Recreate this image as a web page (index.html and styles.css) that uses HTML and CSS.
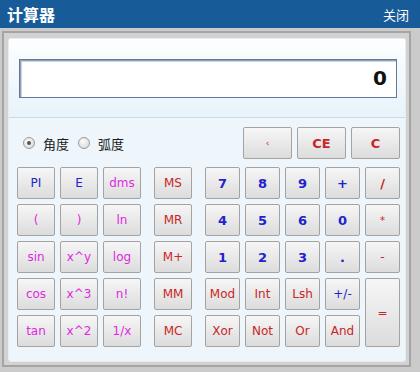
FILE: index.html
```html
<!DOCTYPE html>
<html lang="zh">

<head>
    <title>计算器</title>
    <meta charset="UTF-8">
    <meta name="viewport" content="width=device-width, initial-scale=1.0">
    <link rel="stylesheet" href="styles.css">
</head>

<body>
    <div class="calc">
        <div class="titlebar">
            <span class="title">计算器</span>
            <span class="close">关闭</span>
        </div>

        <div class="frame">
            <div class="frame-inner">
                <div class="panel">
                    <div class="screen">
                        <div class="display">0</div>
                    </div>

                    <div class="keys">
                        <div class="top-row">
                            <div class="modes">
                                <label class="mode"><span class="radio checked"></span>角度</label>
                                <label class="mode"><span class="radio"></span>弧度</label>
                            </div>
                            <div class="edit-keys">
                                <button type="button" class="key edit red tiny">‹</button>
                                <button type="button" class="key edit red bold">CE</button>
                                <button type="button" class="key edit red bold">C</button>
                            </div>
                        </div>

                        <div class="pad">
                            <div class="sci">
                                <button type="button" class="key blue">PI</button>
                                <button type="button" class="key blue">E</button>
                                <button type="button" class="key pink">dms</button>
                                <button type="button" class="key pink">(</button>
                                <button type="button" class="key pink">)</button>
                                <button type="button" class="key pink">ln</button>
                                <button type="button" class="key pink">sin</button>
                                <button type="button" class="key pink">x^y</button>
                                <button type="button" class="key pink">log</button>
                                <button type="button" class="key pink">cos</button>
                                <button type="button" class="key pink">x^3</button>
                                <button type="button" class="key pink">n!</button>
                                <button type="button" class="key pink">tan</button>
                                <button type="button" class="key pink">x^2</button>
                                <button type="button" class="key pink">1/x</button>
                            </div>

                            <div class="mem">
                                <button type="button" class="key red">MS</button>
                                <button type="button" class="key red">MR</button>
                                <button type="button" class="key red">M+</button>
                                <button type="button" class="key red">MM</button>
                                <button type="button" class="key red">MC</button>
                            </div>

                            <div class="num">
                                <button type="button" class="key blue bold">7</button>
                                <button type="button" class="key blue bold">8</button>
                                <button type="button" class="key blue bold">9</button>
                                <button type="button" class="key blue bold">+</button>
                                <button type="button" class="key red bold">/</button>
                                <button type="button" class="key blue bold">4</button>
                                <button type="button" class="key blue bold">5</button>
                                <button type="button" class="key blue bold">6</button>
                                <button type="button" class="key blue bold">0</button>
                                <button type="button" class="key red small">*</button>
                                <button type="button" class="key blue bold">1</button>
                                <button type="button" class="key blue bold">2</button>
                                <button type="button" class="key blue bold">3</button>
                                <button type="button" class="key blue bold">.</button>
                                <button type="button" class="key red">-</button>
                                <button type="button" class="key red">Mod</button>
                                <button type="button" class="key red">Int</button>
                                <button type="button" class="key red">Lsh</button>
                                <button type="button" class="key blue">+/-</button>
                                <button type="button" class="key red equals">=</button>
                                <button type="button" class="key red">Xor</button>
                                <button type="button" class="key red">Not</button>
                                <button type="button" class="key red">Or</button>
                                <button type="button" class="key red">And</button>
                            </div>
                        </div>
                    </div>
                </div>
            </div>
        </div>
    </div>
</body>

</html>
```

FILE: styles.css
```css
body {
    margin: 0;
    background: #fff;
    font-family: "DejaVu Sans", "Noto Sans CJK SC", sans-serif;
}

.calc {
    width: 420px;
}

.titlebar {
    height: 28px;
    background: #175c99;
    color: #fff;
    display: flex;
    align-items: center;
    justify-content: space-between;
    padding: 0 11px 0 7px;
    font-family: "Noto Sans CJK SC", sans-serif;
}

.title {
    font-size: 16px;
    font-weight: bold;
}

.close {
    font-size: 13px;
}

/* grey window frame around the calculator body */
.frame {
    background: #cbcbcb;
    padding: 3px 9px 5px 2px;
}

.frame-inner {
    border: 2px solid #a4a4a4;
    background: #d2d2d2;
    padding: 5px 3px 3px 4px;
}

.panel {
    border: 1px solid #e6ecf0;
    border-radius: 3px;
    background: #eef6fc;
}

.screen {
    height: 79px;
    box-sizing: border-box;
    padding: 20px 8px 0 10px;
    background: linear-gradient(#fdfeff, #e8f3fa);
    border-bottom: 1px solid #c6dbea;
}

.display {
    height: 39px;
    box-sizing: border-box;
    background: #fff;
    border: 1px solid #62799a;
    box-shadow: inset 1px 1px 0 #8e9fb6, inset 2px 2px 0 #ccd4de;
    text-align: right;
    padding-right: 9px;
    font-size: 20px;
    font-weight: bold;
    line-height: 37px;
    color: #111;
}

.keys {
    padding: 9px 5px 14px 8px;
}

.top-row {
    display: flex;
    justify-content: space-between;
    align-items: center;
}

.modes {
    display: flex;
    align-items: center;
    padding-left: 6px;
    font-family: "Noto Sans CJK SC", sans-serif;
    font-size: 13px;
    color: #222;
}

.mode {
    display: flex;
    align-items: center;
    margin-right: 9px;
}

.radio {
    width: 10px;
    height: 10px;
    border-radius: 50%;
    border: 1px solid #9a9a9a;
    background: radial-gradient(circle at 40% 35%, #fafafa, #d4d4d4);
    margin-right: 8px;
    position: relative;
}

.radio.checked::after {
    content: "";
    position: absolute;
    left: 3px;
    top: 3px;
    width: 4px;
    height: 4px;
    border-radius: 50%;
    background: #555;
}

.edit-keys {
    display: flex;
    gap: 5px;
}

.key {
    height: 32px;
    padding: 0;
    border: 1px solid #a3a3a3;
    border-radius: 2px;
    background: linear-gradient(#f6f6f6, #dcdcdc);
    font-family: "DejaVu Sans", sans-serif;
    font-size: 12px;
}

.key.edit {
    width: 49px;
}

.pad {
    display: flex;
    gap: 13px;
    margin-top: 8px;
}

.sci {
    display: grid;
    grid-template-columns: repeat(3, 38px);
    grid-auto-rows: 32px;
    gap: 5px;
}

.mem {
    display: grid;
    grid-template-columns: 38px;
    grid-auto-rows: 32px;
    gap: 5px;
}

.num {
    display: grid;
    grid-template-columns: repeat(5, 35px);
    grid-auto-rows: 32px;
    gap: 5px;
}

.key.equals {
    grid-row: span 2;
    height: auto;
}

.blue {
    color: #2222cc;
}

.pink {
    color: #e028e0;
}

.red {
    color: #c82626;
}

.bold {
    font-weight: bold;
    font-size: 13px;
}

.small {
    font-size: 10px;
}

.tiny {
    font-size: 9px;
}
```
